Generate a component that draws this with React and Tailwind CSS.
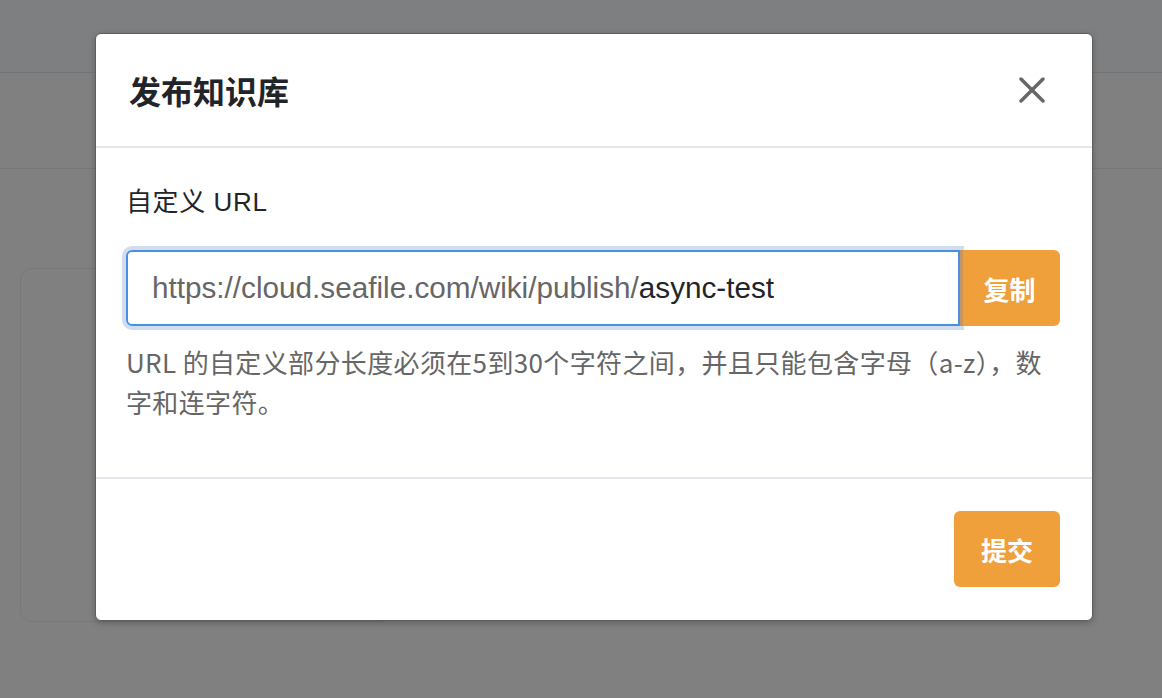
export default function App() {
  const cjk = { fontFamily: '"Noto Sans CJK SC", "Liberation Sans", sans-serif' };
  return (
    <div className="relative h-[698px] w-full overflow-hidden bg-[#808080]" style={cjk}>
      {/* page behind the overlay */}
      <div className="h-[73px] border-b border-[#747474] bg-[#7e7f81]" />
      <div className="h-[96px] border-b border-[#767676]" />
      <div className="ml-[20px] mt-[99px] h-[354px] w-[372px] rounded-[12px] border border-[#787878]" />

      {/* modal */}
      <div className="absolute inset-0 flex items-start pl-[95px] pt-[33px]">
        <div className="w-[998px] rounded-[6px] border border-[#5e5e5e] bg-white shadow-[0_2px_6px_rgba(0,0,0,0.25)]">
          <div className="flex h-[114px] items-center justify-between border-b-2 border-[#e3e7ec] pl-[33px] pr-[47px]">
            <h2 className="text-[32px] font-bold leading-none text-[#212529]">发布知识库</h2>
            <svg width="26" height="26" viewBox="0 0 26 26" fill="none" stroke="#666" strokeWidth="3.4" strokeLinecap="round">
              <path d="M2 2 L24 24 M24 2 L2 24" />
            </svg>
          </div>

          <div className="pl-[30px] pr-[32px] pt-[34px] pb-[55px]">
            <div
              className="mb-[28px] text-[26px] leading-[40px] tracking-[0.6px] text-[#212529]"
              style={{ fontFamily: '"Liberation Sans", "Noto Sans CJK SC", sans-serif' }}
            >
              自定义 URL
            </div>
            <div className="flex h-[76px]">
              <div
                className="flex flex-1 items-center rounded-l-[6px] border-2 border-[#4a90e2] pl-[24px] text-[29.7px] shadow-[0_0_0_4px_#d0dcf0]"
                style={{ fontFamily: '"Liberation Sans", sans-serif' }}
              >
                <span className="text-[#666]">https://cloud.seafile.com/wiki/publish/</span>
                <span className="text-[#212529]">async-test</span>
              </div>
              <button
                type="button"
                className="relative w-[100px] rounded-r-[6px] border-l-[3px] border-[#c9955f] bg-[#f0a03b] pr-[4px] text-[26px] font-bold text-white"
              >
                复制
              </button>
            </div>
            <p className="mt-[16px] text-[26px] leading-[40px] tracking-[0.36px] text-[#666]">
              <span className="whitespace-nowrap">URL 的自定义部分长度必须在5到30个字符之间，并且只能包含字母（a-z），数</span>
              <br />
              字和连字符。
            </p>
          </div>

          <div className="flex justify-end border-t-2 border-[#e3e7ec] pr-[32px] pt-[32px] pb-[33px]">
            <button
              type="button"
              className="h-[76px] w-[106px] rounded-[6px] bg-[#f0a03b] text-[26px] font-bold text-white"
            >
              提交
            </button>
          </div>
        </div>
      </div>
    </div>
  );
}
